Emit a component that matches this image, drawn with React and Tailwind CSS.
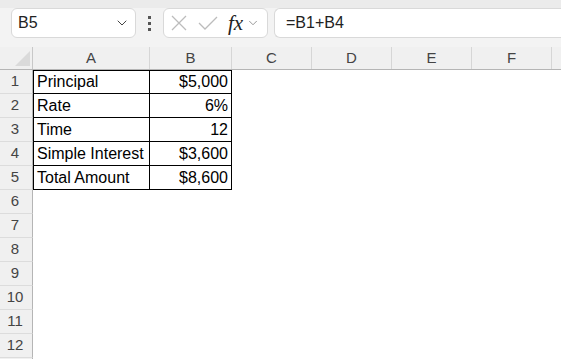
import { ChevronDown } from "lucide-react";

const rows = [
  ["Principal", "$5,000"],
  ["Rate", "6%"],
  ["Time", "12"],
  ["Simple Interest", "$3,600"],
  ["Total Amount", "$8,600"],
];

const cols = [
  { label: "A", w: "w-[117px]" },
  { label: "B", w: "w-[82px]" },
  { label: "C", w: "w-[80px]" },
  { label: "D", w: "w-[80px]" },
  { label: "E", w: "w-[80px]" },
  { label: "F", w: "w-[80px]" },
];

function FormulaBar() {
  return (
    <div className="bg-[#f3f3f3]">
      <div className="h-[8px] bg-[#ebebeb]" />
      <div className="flex h-[30px] pl-[11px]">
        {/* name box */}
        <div className="flex w-[125px] items-center justify-between rounded-[6px] border border-[#d9d9d9] bg-white pl-[6px] pr-[5px]">
          <span className="text-[16px] text-[#222]">B5</span>
          <ChevronDown size={16} strokeWidth={1.5} className="text-[#444]" />
        </div>
        <div className="flex w-[27px] flex-col items-center justify-center gap-[3px]">
          <span className="h-[3px] w-[3px] bg-[#555]" />
          <span className="h-[3px] w-[3px] bg-[#555]" />
          <span className="h-[3px] w-[3px] bg-[#555]" />
        </div>
        {/* cancel / enter / fx */}
        <div className="flex w-[105px] items-center rounded-[6px] border border-[#d9d9d9] bg-white pl-[6px]">
          <svg width="18" height="18" viewBox="0 0 18 18" className="text-[#bcbcbc]">
            <path d="M2 2 L16 16 M16 2 L2 16" stroke="currentColor" strokeWidth="1.3" fill="none" />
          </svg>
          <svg width="22" height="18" viewBox="0 0 22 18" className="ml-[9px] text-[#bcbcbc]">
            <path d="M2 9 L8 15 L20 3" stroke="currentColor" strokeWidth="1.3" fill="none" />
          </svg>
          <span className="ml-[9px] font-['Liberation_Serif'] text-[21px] italic leading-none text-[#222]">fx</span>
          <ChevronDown size={14} strokeWidth={1.3} className="ml-[3px] text-[#777]" />
        </div>
        <div className="ml-[6px] flex flex-1 items-center rounded-l-[6px] border-y border-l border-[#d9d9d9] bg-white pl-[11px]">
          <span className="text-[16px] text-[#222]">=B1+B4</span>
        </div>
      </div>
      <div className="h-[9px]" />
    </div>
  );
}

function HeaderRow() {
  return (
    <div className="flex h-[23px] border-b border-[#b5b5b5] bg-[#f0f0f0]">
      <div className="relative w-[33px] border-r border-[#c8c8c8]">
        <svg width="33" height="22" className="absolute left-0 top-0">
          <polygon points="30,4 30,19 15,19" fill="#dadada" />
        </svg>
      </div>
      {cols.map((c) => (
        <div
          key={c.label}
          className={`${c.w} flex items-center justify-center border-r border-[#d6d6d6] text-[15px] text-[#444]`}
        >
          {c.label}
        </div>
      ))}
      <div className="flex-1" />
    </div>
  );
}

export default function App() {
  const allRows = Array.from({ length: 12 }, (_, i) => i + 1);
  return (
    <div className="h-[359px] w-[561px] overflow-hidden bg-white font-['Liberation_Sans',sans-serif]">
      <FormulaBar />
      <HeaderRow />
      {allRows.map((n) => {
        const data = rows[n - 1];
        return (
          <div key={n} className="flex h-[24px]">
            <div className="flex w-[33px] shrink-0 items-center justify-center border-r border-b border-r-[#b5b5b5] border-b-[#dcdcdc] bg-[#f0f0f0] pr-[2px] text-[15px] text-[#444]">
              {n}
            </div>
            {data ? (
              <>
                <div
                  className={`flex w-[117px] items-center border-x border-b border-black pl-[3px] text-[16px] text-black ${
                    n === 1 ? "border-t" : ""
                  }`}
                >
                  {data[0]}
                </div>
                <div
                  className={`flex w-[82px] items-center justify-end border-r border-b border-black pr-[3px] text-[16px] text-black ${
                    n === 1 ? "border-t" : ""
                  }`}
                >
                  {data[1]}
                </div>
              </>
            ) : null}
            <div className="flex-1" />
          </div>
        );
      })}
      <div className="flex h-[24px]">
        <div className="w-[33px] shrink-0 border-r border-[#b5b5b5] bg-[#f0f0f0]" />
      </div>
    </div>
  );
}
